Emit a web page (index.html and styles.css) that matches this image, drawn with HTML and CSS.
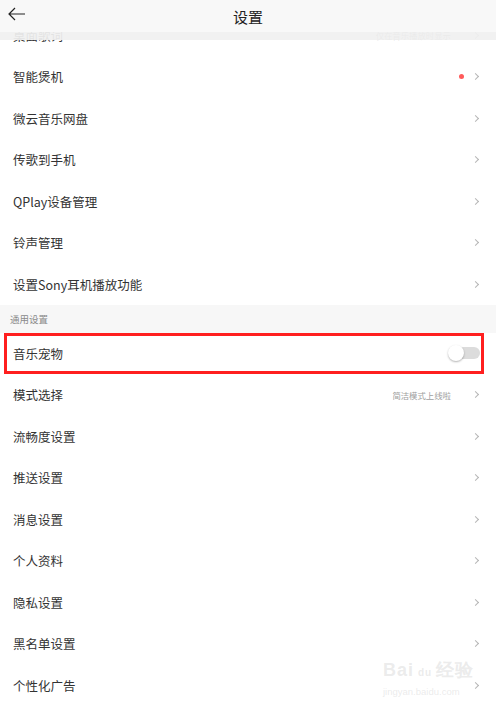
FILE: index.html
```html
<html>

<head>
  <link rel="stylesheet" href="styles.css">
</head>

<body>
  <div class="topbar">
    <div class="topbar-main">
      <svg class="back" width="18" height="14" viewBox="0 0 18 14">
        <path d="M1 7 H17 M7 1 L1 7 L7 13" fill="none" stroke="#222" stroke-width="1.2" />
      </svg>
      <div class="title">设置</div>
    </div>
    <div class="topbar-shade"></div>
  </div>

  <div class="list">
    <div class="row">
      <span class="label">桌面歌词</span>
      <span class="right"><span class="value">仅在音乐播放时显示</span><span class="chev"></span></span>
    </div>
    <div class="row">
      <span class="label">智能煲机</span>
      <span class="right"><span class="dot"></span><span class="chev"></span></span>
    </div>
    <div class="row">
      <span class="label">微云音乐网盘</span>
      <span class="right"><span class="chev"></span></span>
    </div>
    <div class="row">
      <span class="label">传歌到手机</span>
      <span class="right"><span class="chev"></span></span>
    </div>
    <div class="row">
      <span class="label">QPlay设备管理</span>
      <span class="right"><span class="chev"></span></span>
    </div>
    <div class="row">
      <span class="label">铃声管理</span>
      <span class="right"><span class="chev"></span></span>
    </div>
    <div class="row">
      <span class="label">设置Sony耳机播放功能</span>
      <span class="right"><span class="chev"></span></span>
    </div>

    <div class="section">通用设置</div>

    <div class="row highlight">
      <span class="label">音乐宠物</span>
      <span class="switch"><span class="knob"></span></span>
    </div>
    <div class="row">
      <span class="label">模式选择</span>
      <span class="right"><span class="value">简洁模式上线啦</span><span class="chev"></span></span>
    </div>
    <div class="row">
      <span class="label">流畅度设置</span>
      <span class="right"><span class="chev"></span></span>
    </div>
    <div class="row">
      <span class="label">推送设置</span>
      <span class="right"><span class="chev"></span></span>
    </div>
    <div class="row">
      <span class="label">消息设置</span>
      <span class="right"><span class="chev"></span></span>
    </div>
    <div class="row">
      <span class="label">个人资料</span>
      <span class="right"><span class="chev"></span></span>
    </div>
    <div class="row">
      <span class="label">隐私设置</span>
      <span class="right"><span class="chev"></span></span>
    </div>
    <div class="row">
      <span class="label">黑名单设置</span>
      <span class="right"><span class="chev"></span></span>
    </div>
    <div class="row">
      <span class="label">个性化广告</span>
      <span class="right"><span class="chev"></span></span>
    </div>
  </div>

  <div class="watermark">
    <div class="wm-top">Bai<span class="wm-paw">du</span>经验</div>
    <div class="wm-url">jingyan.baidu.com</div>
  </div>
</body>

</html>
```

FILE: styles.css
```css
body {
  margin: 0;
  padding: 0;
  width: 496px;
  height: 706px;
  overflow: hidden;
  background-color: #ffffff;
  font-family: "Noto Sans CJK SC", "Noto Sans", sans-serif;
  color: #333333;
  position: relative;
}

.topbar {
  position: absolute;
  top: 0;
  left: 0;
  width: 100%;
  z-index: 10;
}

.topbar-main {
  height: 32px;
  background-color: #f8f8f8;
  display: flex;
  align-items: center;
  justify-content: center;
  position: relative;
}

.topbar-shade {
  height: 8px;
  background-color: rgba(240, 240, 240, 0.93);
}

.back {
  position: absolute;
  left: 8px;
  top: 7px;
}

.title {
  font-size: 15px;
  color: #222222;
}

.list {
  padding-top: 14.5px;
}

.row {
  height: 41.5px;
  display: flex;
  align-items: center;
  justify-content: space-between;
  padding: 0 16px 0 13px;
  box-sizing: border-box;
}

.label {
  font-size: 12.5px;
  color: #333333;
}

.right {
  display: flex;
  align-items: center;
}

.value {
  font-size: 8.4px;
  color: #a0a0a0;
  margin-right: 22px;
}

.dot {
  width: 5px;
  height: 5px;
  border-radius: 50%;
  background-color: #ff5a5a;
  margin-right: 9px;
}

.chev {
  width: 4px;
  height: 4px;
  border-top: 1.2px solid #b5b5b5;
  border-right: 1.2px solid #b5b5b5;
  transform: rotate(45deg);
  margin-right: 2px;
}

.section {
  height: 27.5px;
  background-color: #f7f7f7;
  font-size: 9.5px;
  color: #8a8a8a;
  padding-left: 10px;
  display: flex;
  align-items: center;
}

.highlight {
  margin: 0 12px 0 4px;
  border: 3px solid #ff1f1f;
  padding: 0 1px 0 6px;
  height: 41.5px;
}

.switch {
  width: 31px;
  height: 12px;
  border-radius: 6px;
  background-color: #dcdcdc;
  position: relative;
}

.knob {
  position: absolute;
  left: -1px;
  top: -2px;
  width: 16px;
  height: 16px;
  border-radius: 50%;
  background-color: #ffffff;
  box-shadow: 0 1px 2px rgba(0, 0, 0, 0.3);
}

.watermark {
  position: absolute;
  left: 383px;
  top: 660px;
  color: rgba(205, 205, 205, 0.4);
  font-family: "Liberation Sans", sans-serif;
}

.wm-top {
  font-size: 18px;
  font-weight: bold;
  letter-spacing: 1px;
  line-height: 20px;
}

.wm-paw {
  font-size: 10px;
  margin: 0 4px;
}

.wm-url {
  font-size: 9.5px;
  margin-top: 3px;
}
```
